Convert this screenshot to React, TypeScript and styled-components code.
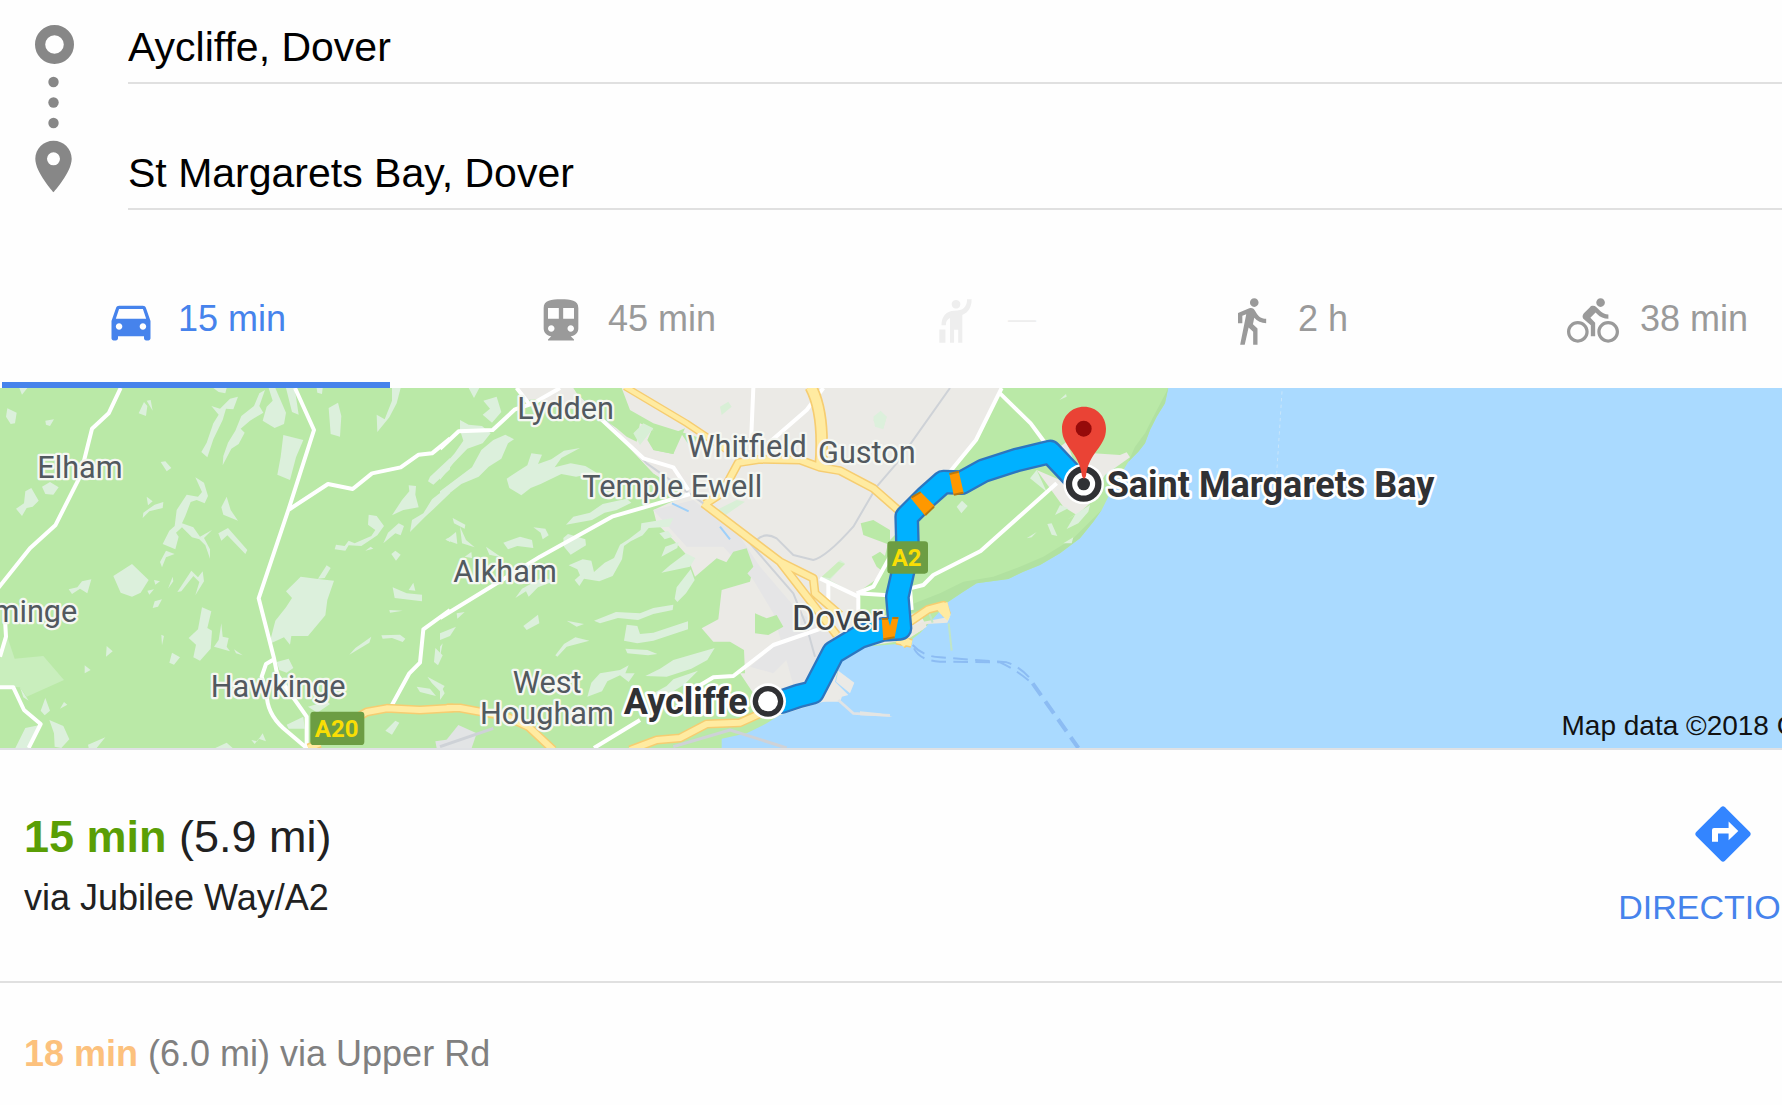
import React from "react";
import styled, { createGlobalStyle } from "styled-components";

const sans = `"Liberation Sans", Arial, Helvetica, sans-serif`;

const GlobalStyle = createGlobalStyle`
  * { box-sizing: border-box; }
  body { margin: 0; background: #fefefe; font-family: ${sans}; overflow-x: hidden; }
`;

const Page = styled.main`
  width: 100%;
  overflow: hidden;
`;

const SearchForm = styled.form`
  display: flex;
`;

const Rail = styled.svg`
  flex: 0 0 128px;
  height: 210px;
`;

const Fields = styled.div`
  flex: 1;
  min-width: 0;
  display: flex;
  flex-direction: column;
  gap: 42px;
`;

const PlaceInput = styled.input`
  width: 100%;
  height: 84px;
  padding: 12px 0 0;
  border: 0;
  border-bottom: 2px solid #e0e0e0;
  border-radius: 0;
  outline: 0;
  background: transparent;
  color: #000;
  font: 41px ${sans};
`;

const Tabs = styled.nav`
  display: grid;
  grid-template-columns: 388fr 358fr 248fr 300fr 318fr;
  column-gap: 42px;
  height: 129px;
  margin-top: 49px;
  padding-left: 2px;
`;

const Tab = styled.button<{ $tone: string; $active?: boolean }>`
  display: flex;
  align-items: center;
  gap: 21px;
  min-width: 0;
  padding: 0 0 0 103px;
  border: 0;
  border-bottom: 6px solid ${(p) => (p.$active ? "#4683ec" : "transparent")};
  background: none;
  color: ${(p) => p.$tone};
  font: 36px/40px ${sans};
  white-space: nowrap;
`;

const TabIcon = styled.svg`
  flex: none;
  width: 52px;
  height: 52px;
  fill: currentColor;
`;

const TabLabel = styled.span<{ $small?: boolean }>`
  padding-bottom: 4px;
  font-size: ${(p) => (p.$small ? 28 : 36)}px;
`;

const MapFrame = styled.section`
  position: relative;
  height: 362px;
  border-bottom: 2px solid #dfe1e4;
  overflow: hidden;
`;

const MapDrawing = styled.svg`
  display: block;
  width: 100%;
  height: 360px;
  font-family: Roboto, sans-serif;
`;

const MapCredit = styled.span`
  position: absolute;
  right: -85px;
  bottom: 6px;
  color: #111;
  font-size: 28px;
  line-height: 32px;
  white-space: nowrap;
`;

const RouteCard = styled.section`
  display: flex;
  justify-content: space-between;
  height: 233px;
  padding: 56px 0 0 24px;
  border-bottom: 2px solid #e0e0e0;
`;

const RouteTitle = styled.h1`
  margin: 0;
  padding-top: 5px;
  color: #212121;
  font-size: 45px;
  font-weight: 400;
  line-height: 52px;
`;

const Duration = styled.strong<{ $color: string }>`
  color: ${(p) => p.$color};
  font-weight: 700;
`;

const RouteVia = styled.p`
  margin: 15px 0 0;
  color: #212121;
  font-size: 36px;
  line-height: 40px;
`;

const DirectionsButton = styled.button`
  display: flex;
  flex-direction: column;
  align-items: center;
  align-self: flex-start;
  flex: none;
  gap: 25px;
  margin-right: -46px;
  padding: 0;
  border: 0;
  background: none;
  color: #4683ec;
  font: 34px/40px ${sans};
`;

const DirectionsIcon = styled.svg`
  width: 56px;
  height: 56px;
`;

const AltRoute = styled.p`
  margin: 0;
  padding: 51px 24px 31px;
  color: #808080;
  font-size: 36px;
  line-height: 40px;
`;

const CAR =
  "M18.92 6.01C18.72 5.42 18.16 5 17.5 5h-11c-.66 0-1.21.42-1.42 1.01L3 12v8c0 .55.45 1 1 1h1c.55 0 1-.45 1-1v-1h12v1c0 .55.45 1 1 1h1c.55 0 1-.45 1-1v-8l-2.08-5.99zM6.5 16c-.83 0-1.5-.67-1.5-1.5S5.67 13 6.5 13s1.5.67 1.5 1.5S7.33 16 6.5 16zm11 0c-.83 0-1.5-.67-1.5-1.5s.67-1.5 1.5-1.5 1.5.67 1.5 1.5-.67 1.5-1.5 1.5zM5 11l1.5-4.5h11L19 11H5z";
const TRAIN =
  "M12 2c-4.42 0-8 .5-8 4v9.5C4 17.43 5.57 19 7.5 19L6 20.5v.5h12v-.5L16.5 19c1.93 0 3.5-1.57 3.5-3.5V6c0-3.5-3.58-4-8-4zM7.5 17c-.83 0-1.5-.67-1.5-1.5S6.67 14 7.5 14s1.5.67 1.5 1.5S8.33 17 7.5 17zm3.5-6H6V6h5v5zm5.500 6c-.83 0-1.500-.67-1.500-1.500s.67-1.500 1.500-1.500 1.500.67 1.500 1.500-.67 1.500-1.500 1.500zm1.500-6h-5V6h5v5z";
const HAIL =
  "M9.700 2.250a2 2 0 1 0 .01 0zM14.800 2H16.900C16.900 5.500 15.600 8 12.600 9.200V22H10.700V16H8.800V22H6.900V10.600C5.600 11.200 5 12.300 5 14H3C3 10.300 4.900 7.300 9 7.300 12.800 7.300 14.800 5.600 14.800 2zM2 15.900H4.800V22H2z";
const WALK =
  "M13.5 5.500c1.100 0 2-.9 2-2s-.9-2-2-2-2 .9-2 2 .9 2 2 2zM9.800 8.900L7 23h2.100l1.800-8 2.100 2v6h2v-7.500l-2.100-2 .6-3C14.800 12 16.800 13 19 13v-2c-1.900 0-3.500-1-4.300-2.400l-1-1.600c-.4-.6-1-1-1.700-1-.3 0-.5.1-.8.1L6 8.300V13h2V9.600l1.800-.7";
const BIKE =
  "M15.5 5.500c1.100 0 2-.9 2-2s-.9-2-2-2-2 .9-2 2 .9 2 2 2zM5 12c-2.800 0-5 2.200-5 5s2.200 5 5 5 5-2.200 5-5-2.200-5-5-5zm0 8.500c-1.900 0-3.500-1.600-3.500-3.500s1.600-3.500 3.500-3.500 3.500 1.600 3.500 3.500-1.600 3.500-3.500 3.500zm5.800-10l2.400-2.400.8.8c1.300 1.300 3 2.100 5.100 2.100V9c-1.500 0-2.700-.6-3.600-1.500l-1.900-1.900c-.5-.4-1-.6-1.600-.6s-1.100.2-1.400.6L7.800 8.400c-.4.400-.6.9-.6 1.400 0 .6.2 1.100.6 1.400L11 14v5h2v-6.200l-2.200-2.300zM19 12c-2.800 0-5 2.200-5 5s2.200 5 5 5 5-2.200 5-5-2.200-5-5-5zm0 8.500c-1.900 0-3.500-1.600-3.500-3.500s1.600-3.500 3.500-3.500 3.500 1.600 3.500 3.500-1.600 3.500-3.500 3.500z";

const modes = [
  { name: "Driving", icon: CAR, label: "15 min", tone: "#4683ec", active: true },
  { name: "Transit", icon: TRAIN, label: "45 min", tone: "#9a9a9a" },
  { name: "Ride service", icon: HAIL, label: "—", tone: "#eeeeee", small: true },
  { name: "Walking", icon: WALK, label: "2 h", tone: "#9a9a9a" },
  { name: "Cycling", icon: BIKE, label: "38 min", tone: "#9a9a9a" },
];

// The map is drawn in three sheets, each with its own local origin.
const WEST = "translate(0 -24)";
const MIDDLE = "translate(1320 -24)";
const EAST = "translate(2580 -24)";

const PATCH = "#dcf0dc";
const URBAN = "#ebeae6";
const GREEN = "#bae9a7";

const westPatches =
  "M22 85L50 98 45 130 32 132 18 110zM58 24H82L66 44zM136 122L162 118 150 138 138 134zM416 100L432 66 442 78 438 108zM440 62L452 60 458 92zM640 24H680L676 40 656 36zM690 56L714 50 700 88 678 86 668 120 640 178 622 232 604 216 620 188 640 130 656 104 634 78 660 86zM795 30L778 78 790 98 750 122 722 146 734 158 716 192 694 206 668 256 670 228 684 188 706 152 724 108 762 78 778 40zM806 24H826L858 98 852 132 824 144 788 122 800 80 818 62zM858 24H884L896 104 876 96zM850 165L910 180 888 232 870 300 832 284 842 230zM986 84L1014 68 1024 108 1020 170 992 162zM950 24H968L966 42 952 38zM1176 24H1202L1190 70 1168 112 1132 156 1130 104 1154 118 1176 62zM482 246L496 244 514 264 500 274zM586 292L612 308 624 348 614 370 590 360 572 366 556 408 546 430 580 442 600 470 636 450 612 474 630 508 630 536 616 496 598 478 576 472 546 442 528 458 536 470 526 508 488 492 508 452 524 438 530 390 560 344 594 350 606 336zM440 350L458 364 444 376zM490 366L488 384 448 394 428 414 430 398 464 374zM680 350L692 390 714 422 670 404 664 382zM655 460L684 444 742 510 736 522 682 466 664 482zM498 512L524 522 498 532 486 562 480 546zM48 386L72 370 76 334 94 324 116 362 98 380 80 384 66 408zM126 320L150 306 176 322 160 344 136 342zM340 588L396 552 446 600 422 638 396 650 362 638zM206 628L232 622 246 604 274 598 262 640 240 626 216 642zM462 600L480 604 466 614zM442 632L462 628 448 644zM518 590L520 604 504 626zM532 636L574 572 594 592 608 574 612 604 586 646 598 606 580 588 544 634zM486 658L474 680 458 684 464 664zM606 682L634 694 622 744 636 752 632 806 600 842 580 832 588 794 566 774 594 748zM664 730L668 770 686 774 680 800 690 814 642 800 656 780zM702 808L728 826 708 820zM484 764L492 768 486 796zM320 798L338 814 318 830zM516 818L540 832 522 854 508 848zM254 856L272 870 254 880zM902 590L948 596 1002 602 982 660 976 706 924 768 874 768 870 794 852 772 808 792 826 722 858 682 876 654 858 634zM954 596L980 556 992 564 974 594zM830 846L866 836 880 864 860 878 838 870zM924 980L980 964 990 972 952 998zM136 954L150 992 134 1006 122 992zM180 986L192 966 202 974zM148 1020L190 1038 208 1078 184 1104 164 1100 162 1060zM76 1044L116 1036 90 1104H46zM60 922L86 962 70 952zM264 1094L316 1072 290 1104H266zM754 1080L772 1084 788 1060 798 1084 776 1076 764 1092zM646 1104L680 1088 698 1104zM860 1034L910 1010 914 1046 866 1046zM1290 290L1350 234V268L1300 314 1284 304zM1176 406L1206 360 1228 334 1226 316 1248 318 1246 344 1256 382 1210 390zM1350 316V340L1300 388 1274 412 1230 456 1236 420 1270 400 1296 358zM1106 404L1130 408 1152 438 1132 466 1084 498 1046 496 1036 512 1004 508 1008 494 1034 498 1046 482 1064 490 1114 468 1126 450 1104 434zM1196 430L1212 438 1202 466 1186 460 1150 490 1164 458zM1174 522L1186 512 1202 524 1188 542zM1096 512L1112 500 1120 506zM1178 622L1220 640 1266 644V664L1184 654zM1240 608L1246 632 1226 630zM1168 690L1208 692 1170 698zM1144 766L1200 764 1216 776 1208 786 1176 774 1148 776zM1114 770L1108 788 1048 824 1066 804zM1306 804L1328 826 1314 856 1302 846zM1282 890L1334 918 1322 936 1296 910zM1250 920L1290 926 1308 948 1260 936zM1156 1052L1186 1022 1198 1028 1176 1064zM1336 478L1350 472V486z";

const middlePatches =
  "M86 24H118L102 54zM130 62L170 50 184 96 156 128 128 104 150 86zM60 150L60 120 86 134 126 138 152 160 128 190 82 206 40 250 0 300V270L44 220 70 182zM196 164L222 178 204 190 184 236 146 260 116 290 64 312 0 362V334L64 286 96 262 124 210 160 180zM200 296L236 272 262 256 274 220 306 224 294 252 334 238 372 212 420 204 364 234 344 262 392 250 436 258 470 278 408 290 364 282 302 312 272 324 244 346 208 324zM378 434L400 410 450 398 488 372 560 356 574 368 530 390 494 398 456 420 390 432zM38 414L76 434 74 446 42 430zM18 480L48 456 52 492zM60 440L78 480 104 502 66 490zM74 530L94 516 96 534zM138 500L184 532 148 524zM190 488L240 470 276 480 280 504 232 498 204 508zM280 442L316 446 326 466 308 478 302 458zM370 474L384 462 436 478 438 496 392 524 372 500zM604 430L700 414 688 440 626 444 608 466 572 484 552 498 546 538 518 588 478 604 432 596 418 618 404 600 420 586 412 568 386 556 428 538 454 542 462 576 494 548 522 534 540 494 566 478 602 450zM658 460L684 452 698 470 674 478zM664 530L676 500 716 486 712 504zM738 520L766 534 750 560 664 578 690 556zM752 568L764 600 738 640 712 666 704 656 710 622zM226 654L246 626 308 592 342 604 294 622 266 650 258 634zM462 722L528 696 600 700 640 684 700 674 698 690 640 702 594 720 534 714 480 730zM250 738L294 704 298 730 260 750zM380 722L432 732 410 740zM560 734L592 738 600 762 640 758 744 724 744 748 640 782 592 790 552 782zM346 826L372 792 406 772 448 782 380 800 352 830zM556 806L622 810 652 822 624 826 562 820zM824 804L802 840 754 866 680 890 616 888 660 866 700 840 754 824zM442 950L454 908 480 880 540 870 566 856 556 880 584 880 566 906 540 886 502 904 486 934zM774 872L732 914 680 946 618 952 680 918 700 898zM50 700L74 696 52 716zM0 760L48 740 30 768 0 780zM0 800L8 790 0 830zM0 910L14 940 0 960z";

const places = [
  { x: 1320, dx: 232, dy: 117, text: "Lydden" },
  { x: 0, dx: 112, dy: 295, text: "Elham" },
  { x: 1320, dx: 742, dy: 232, text: "Whitfield" },
  { x: 1320, dx: 1134, dy: 248, text: "Guston" },
  { x: 1320, dx: 427, dy: 351, text: "Temple Ewell" },
  { x: 1320, dx: 40, dy: 606, text: "Alkham" },
  { x: 0, dx: 632, dy: 950, text: "Hawkinge" },
  { x: 1320, dx: 218, dy: 938, text: "West" },
  { x: 1320, dx: 120, dy: 1031, text: "Hougham" },
];

const route =
  "M-275 965L-235 965 -185 948 -142 937 -80 818 0 770 70 748 120 745 112 650 128 580 143 520 140 410 200 350 250 306 305 308 370 272 470 240 570 216 640 290 671 312";

function RegionMap() {
  return (
    <MapDrawing viewBox="0 0 5346 1080" preserveAspectRatio="xMinYMin slice" role="img" aria-label="Map of the route from Aycliffe to Saint Margarets Bay">
      <rect width="5346" height="1080" fill="#aadaff" />

      <g transform={MIDDLE}>
        <path fill={GREEN} d="M-1330 20H2185L2175 70 2150 110 2130 150 2115 190 2095 215 2065 245 2020 320 1985 390 1960 425 1920 475 1860 520 1800 555 1750 575 1705 597 1610 610 1570 635 1525 665 1440 760 1400 790 1270 800 1200 845 1190 890 1150 960 1020 1005 980 1030 920 1060 845 1076V1110H-1330z" />
        <path fill="#b1e1a0" d="M2185 24L2175 70 2150 110 2130 150 2115 190 2095 215 2065 245 2085 200 2115 160 2135 120zM1985 390L1960 425 1920 475 1860 520 1800 555 1750 575 1705 597 1610 610 1570 635 1525 665 1410 700V675L1500 640 1570 605 1660 590 1740 560 1810 530 1900 475 1960 415z" />
        <path fill={URBAN} d="M225 24H400L410 40 480 110 530 145 560 170 590 185 600 130 640 150 640 210 700 222 720 155 750 200 800 180 640 130 570 90 545 24H1685L1610 180 1530 270 1380 400 1370 460 1345 485 1320 590 1250 640 1262 710 1440 700 1460 740 1400 780 1270 800 1200 845 1185 905 1225 945 1150 965 1020 1005 970 985 900 880 915 880 912 810 870 785 820 785 785 745 835 718 845 630 930 605 940 560 880 555 830 535 765 590 740 525 700 480 650 430 640 390 740 345 640 280 490 120 400 50 260 60z" />
        <path fill="#e5e5e6" d="M640 390L760 360 900 470 960 560 1080 700 1190 760 1110 900 1060 915 1000 700 940 600 850 500 740 500zM930 860L1050 760 1090 790 1000 880z" />
        <path fill="#ebe9e6" d="M300 60L400 30 480 110 640 280 740 345 760 300 690 250 600 220 560 180 480 110z" />
        <path fill={GREEN} d="M635 150L700 160 735 145 700 222 640 210 622 180zM880 515L920 505 940 560 900 605 840 630 830 590zM945 700L980 715 1010 705 1030 740 985 765 945 760zM1262 430L1300 420 1350 450V495L1270 465zM1295 530L1320 515 1350 540 1335 580 1310 560zM1262 650L1350 645V700L1262 712z" />
        <path fill="#d8efd6" d="M580 160L610 130 640 145 600 195zM840 80L865 65 875 80 845 105zM1300 120L1320 95 1340 110 1330 145 1310 140zM1140 600L1200 540 1215 550 1170 600 1240 640 1190 625zM820 395L890 360 915 365 850 410z" />
        <path fill="#cceebd" d="M1145 590L1195 545 1215 552 1170 595z" />
        <path fill={PATCH} d={middlePatches} />
        <path fill="#e2e4e5" d="M55 1035L110 1060 95 1104H0z" />
        <path fill={URBAN} d="M1195 872L1243 908 1230 940 1188 905zM1150 920L1210 940 1200 965 1130 965z" />
        <path fill="none" stroke="#e0e3e5" strokeWidth="8" d="M1195 960L1240 1000 1290 1003 1350 1006" />
      </g>
      <g transform={WEST}>
        <path fill={PATCH} d={westPatches} />
        <path fill="#c9eebd" d="M22 770L44 836 130 828 192 900 80 950 60 922 0 918V830z" />
        <path fill="#e2e4e5" d="M1306 1084L1350 1078V1104H1310z" />
      </g>
      <g transform={EAST}>
        <path fill={URBAN} d="M530 270L600 300 700 220 780 225 800 217 810 232 735 285 690 370 650 405 610 380zM600 200L620 185 640 240z" />
        <path fill={PATCH} d="M290 380L306 362 323 378 304 400zM598 60L618 42 620 50zM500 475L530 456 515 472zM562 432L575 430 592 468 575 464zM600 375L625 385 585 405zM620 420L690 375 685 395 655 430 620 447 645 405zM610 490L640 472 635 490zM510 295L530 270 560 335zM40 110L62 92 80 110 70 148 45 140z" />
        <path fill="#ebe8df" d="M150 740L190 725 270 710 262 728 200 732 190 748 160 765z" />
        <path fill="none" stroke="#c1e6c6" strokeWidth="6" d="M208 700L218 728M266 730L275 812" />
        <path fill="#e4e5e3" d="M0 994L60 1000 98 1010 0 1006z" />
        <path fill="none" stroke="#c9e6fb" strokeWidth="3" strokeDasharray="10 10" d="M1266 34L1258 160 1250 280" />
        <g fill="none" stroke="#8cbcf3" strokeWidth="6" strokeDasharray="44 22">
          <path d="M158 795Q190 830 240 832L440 847Q480 860 510 895" />
          <path d="M162 805Q180 842 240 845L420 847Q470 870 510 905" />
          <path strokeWidth="12" d="M518 910L655 1104" />
        </g>
      </g>

      <g fill="none" stroke="#ced2d7" strokeWidth="6" strokeLinejoin="round">
        <g transform={MIDDLE}>
          <path d="M500 125L620 250 790 370 930 490 1060 640 1100 740 1125 830M950 480Q975 455 1010 475L1060 525 1120 540Q1160 530 1240 440L1310 320 1370 250 1530 24" />
          <path strokeWidth="9" d="M0 1100L160 1045M700 1100L870 1050 1040 1104" />
        </g>
      </g>

      <g fill="none" stroke="#fff" strokeWidth="12" strokeLinejoin="round">
        <g transform={WEST}>
          <path d="M362 24L326 100 276 146 240 290 166 436 90 505 -10 630M885 24L942 150 865 390 776 655 822 835 832 885 920 1010V1104L850 1045Q800 1000 800 940L785 890 798 852 822 838M865 390L984 312 1058 327 1116 280 1202 262 1256 224 1296 220 1350 176M1350 690L1270 748 1260 848 1228 880 1176 975M14 700L18 770 0 830M0 922H40L72 990 122 1032 86 1104" />
        </g>
        <g transform={MIDDLE}>
          <path d="M0 206L56 154 158 150 225 88 280 70 360 24M230 24L270 75M470 105L610 235 700 262 745 330M750 342L640 374 516 410 300 530 0 714M940 24L932 210M1150 24L1100 90 985 190M462 1104L600 1020M740 940L820 892 880 888 1000 795 1160 740M1140 595L1255 650V700M1165 610V660M1250 640L1300 620 1350 530M1250 640L1345 646" />
        </g>
        <g transform={EAST}>
          <path d="M425 24L348 180 270 275M420 40L512 130 560 195M590 310L362 513 220 585 190 615 150 625 155 690" />
        </g>
      </g>

      {["#f6cd71", "#ffeba1"].map((tone, i) => (
        <g key={tone} fill="none" stroke={tone} strokeWidth={i ? 18 : 27} strokeLinejoin="round">
          <path transform={WEST} d="M1050 1025L1100 996 1160 985 1260 990 1360 984M925 1104L960 1090" />
          <g transform={MIDDLE}>
            <path strokeWidth={i ? 14 : 22} d="M555 20L740 130 860 210" />
            <path d="M840 350L895 248 960 238 1080 240 1140 262 1200 272 1300 325 1380 395M790 370L1020 545 1120 595 1125 640 1200 705M795 372L860 330M1020 545L1190 765" />
            <path strokeWidth={i ? 28 : 38} d="M1112 20Q1155 100 1142 262" />
            <path d="M20 984L60 984 200 1010 265 1040 340 1110M570 1110L650 1080 720 1074 800 1032 900 1028 985 990" />
          </g>
          <g transform={EAST}>
            <path d="M150 725L205 688 250 676 260 705M110 780L155 790M125 795L145 775" />
          </g>
        </g>
      ))}
      <path transform={EAST} fill="#ffeba1" d="M225 680L262 666 272 705 262 722 240 700z" />
      <path transform={MIDDLE} fill="none" stroke="#9ed0fa" strokeWidth="6" d="M696 370L746 394M840 440L870 478" />

      <g fill="#52595f" stroke="#f5f7f2" strokeWidth="14" strokeLinejoin="round" paintOrder="stroke" fontSize="92">
        {places.map((p) => (
          <text key={p.text} x={p.x + p.dx} y={p.dy - 24}>{p.text}</text>
        ))}
        <text x="232" y="702" textAnchor="end">Lyminge</text>
      </g>

      <g transform={EAST}>
        <path fill="none" stroke="#2c76bf" strokeWidth="74" strokeLinejoin="round" d={route} />
        <path fill="none" stroke="#00b1ff" strokeWidth="60" strokeLinejoin="round" d={route} />
        <path fill="#ff9800" d="M152 354L182 336 224 378 196 408zM268 282L296 274 311 338 281 346zM65 715L83 714 90 738 97 712 116 712 104 772 70 780z" />
        <path fill="none" stroke="#b9780f" strokeWidth="6" d="M155 352L182 336M196 405L222 380M268 282L296 275M282 344L310 338M66 717L84 716M97 714L115 714M70 778L104 772" />
      </g>

      <g transform={MIDDLE} fill="#3d4247" stroke="#f5f7f2" strokeWidth="12" strokeLinejoin="round" paintOrder="stroke">
        <text x="1055" y="750" fontSize="107">Dover</text>
      </g>

      <g fill="#6c9d43">
        <rect x="931" y="971" width="162" height="100" rx="10" />
        <rect x="2662" y="460" width="122" height="97" rx="10" />
      </g>
      <g fill="#f9de05" fontSize="72" fontWeight="700" textAnchor="middle">
        <text x="1010" y="1046">A20</text>
        <text x="2720" y="533">A2</text>
      </g>

      <g transform={MIDDLE}>
        <circle cx="984" cy="964" r="54" fill="#fff" />
        <circle cx="984" cy="964" r="38" fill="#fff" stroke="#303134" strokeWidth="16" />
      </g>
      <g transform={EAST}>
        <circle cx="671" cy="312" r="61" fill="#fff" />
        <circle cx="671" cy="312" r="44" fill="#fff" stroke="#303134" strokeWidth="19" />
        <circle cx="671" cy="312" r="19" fill="#303134" />
        <path fill="#ea4335" d="M672 80C635 80 606 109 606 146C606 202 658 215 666 288Q672 304 678 288C686 215 738 202 738 146C738 109 709 80 672 80z" />
        <circle cx="671" cy="146" r="24" fill="#960a0a" />
      </g>
      <g fill="#303134" stroke="#fff" strokeWidth="16" strokeLinejoin="round" paintOrder="stroke" fontWeight="700" fontSize="108">
        <text x="2243" y="977" textAnchor="end">Aycliffe</text>
        <text x="3320" y="327">Saint Margarets Bay</text>
      </g>
    </MapDrawing>
  );
}

export default function App() {
  return (
    <Page>
      <GlobalStyle />
      <SearchForm onSubmit={(e) => e.preventDefault()}>
        <Rail viewBox="0 0 128 210" fill="#878787" aria-hidden="true">
          <circle cx="54.500" cy="44.500" r="14.400" fill="none" stroke="#878787" strokeWidth="10.200" />
          <circle cx="53.500" cy="82" r="5.200" />
          <circle cx="53.500" cy="102.500" r="5.200" />
          <circle cx="53.500" cy="123" r="5.200" />
          <path transform="translate(22.300 135.600) scale(2.600 2.580)" fillRule="evenodd" d="M12 2C8.130 2 5 5.130 5 9c0 5.250 7 13 7 13s7-7.750 7-13c0-3.870-3.130-7-7-7zm0 9.500a2.500 2.500 0 0 1 0-5 2.500 2.500 0 0 1 0 5z" />
        </Rail>
        <Fields>
          <PlaceInput aria-label="Starting point" defaultValue="Aycliffe, Dover" />
          <PlaceInput aria-label="Destination" defaultValue="St Margarets Bay, Dover" />
        </Fields>
      </SearchForm>

      <Tabs aria-label="Travel modes">
        {modes.map((m) => (
          <Tab key={m.name} type="button" title={m.name} $tone={m.tone} $active={m.active}>
            <TabIcon viewBox="0 0 24 24" aria-hidden="true">
              <path d={m.icon} />
            </TabIcon>
            <TabLabel $small={m.small}>{m.label}</TabLabel>
          </Tab>
        ))}
      </Tabs>

      <MapFrame>
        <RegionMap />
        <MapCredit>Map data ©2018 Google</MapCredit>
      </MapFrame>

      <RouteCard>
        <div>
          <RouteTitle>
            <Duration $color="#5a9e05">15 min</Duration> (5.9 mi)
          </RouteTitle>
          <RouteVia>via Jubilee Way/A2</RouteVia>
        </div>
        <DirectionsButton type="button">
          <DirectionsIcon viewBox="0 0 56 56" aria-hidden="true">
            <path fill="#3385ff" d="M26 1.200Q28 -.6 30 1.200L54.800 26Q56.600 28 54.800 30L30 54.800Q28 56.600 26 54.800L1.200 30Q-.6 28 1.200 26z" />
            <path fill="#fff" d="M17 35.700V24Q17 22 19 22H33.600V15.600L43.300 25 33.600 34.200V27.600H23V35.700z" />
          </DirectionsIcon>
          DIRECTIONS
        </DirectionsButton>
      </RouteCard>

      <AltRoute>
        <Duration $color="#fcc17d">18 min</Duration> (6.0 mi) via Upper Rd
      </AltRoute>
    </Page>
  );
}
